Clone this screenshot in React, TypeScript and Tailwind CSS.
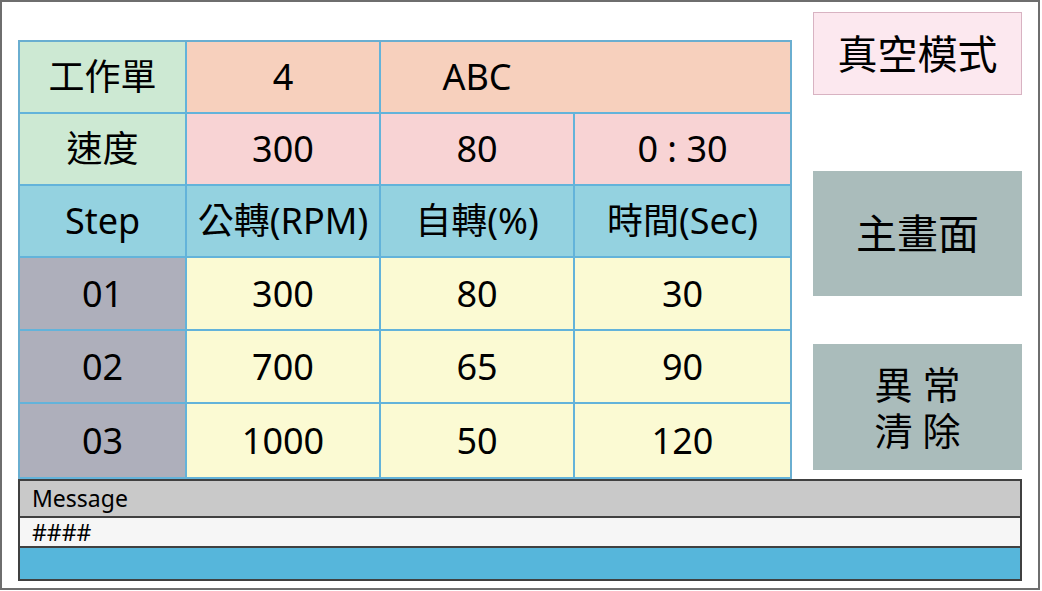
import React from 'react';

const font = { fontFamily: '"Noto Sans", "Noto Sans CJK TC", sans-serif' };

const Cell = ({ bg, children }: { bg: string; children?: React.ReactNode }) => (
  <div className={`${bg} flex items-center justify-center text-[36px] text-black leading-none`}>{children}</div>
);

const steps = [
  ['01', '300', '80', '30'],
  ['02', '700', '65', '90'],
  ['03', '1000', '50', '120'],
];

export default function App() {
  return (
    <div className="w-[1042px] h-[591px] bg-white" style={font}>
      <div className="w-[1040px] h-[590px] border-2 border-[#6e6e6e] bg-white flex flex-col">
        <div className="h-[477px] flex pl-[16px]">
          {/* parameter table */}
          <div className="mt-[38px] w-[774px] h-[439px] bg-[#63b3da] border-2 border-b-0 border-[#6aaed0] grid grid-cols-[165px_192px_192px_215px] grid-rows-[70px_70px_70px_71px_71px_73px] gap-[2px]">
            <Cell bg="bg-[#cde9d3]">工作單</Cell>
            <Cell bg="bg-[#f7d0bd]">4</Cell>
            <div className="col-span-2 bg-[#f7d0bd] flex items-center">
              <span className="w-[192px] text-center text-[36px] leading-none">ABC</span>
            </div>

            <Cell bg="bg-[#cde9d3]">速度</Cell>
            <Cell bg="bg-[#f8d3d4]">300</Cell>
            <Cell bg="bg-[#f8d3d4]">80</Cell>
            <Cell bg="bg-[#f8d3d4]">0 : 30</Cell>

            <Cell bg="bg-[#94d2e0]">Step</Cell>
            <Cell bg="bg-[#94d2e0]">公轉(RPM)</Cell>
            <Cell bg="bg-[#94d2e0]">自轉(%)</Cell>
            <Cell bg="bg-[#94d2e0]">時間(Sec)</Cell>

            {steps.map((row) => (
              <React.Fragment key={row[0]}>
                <Cell bg="bg-[#aeafbb]">{row[0]}</Cell>
                <Cell bg="bg-[#fbfad3]">{row[1]}</Cell>
                <Cell bg="bg-[#fbfad3]">{row[2]}</Cell>
                <Cell bg="bg-[#fbfad3]">{row[3]}</Cell>
              </React.Fragment>
            ))}
          </div>

          {/* side buttons */}
          <div className="ml-[21px] mt-[10px] w-[209px] flex flex-col">
            <div className="h-[83px] bg-[#fce8ef] border border-[#d8b3c2] flex items-center justify-center text-[40px] leading-none">
              真空模式
            </div>
            <div className="mt-[76px] h-[125px] bg-[#aabcbb] flex items-center justify-center text-[41px] leading-none">
              主畫面
            </div>
            <div className="mt-[48px] h-[126px] bg-[#aabcbb] flex items-center justify-center">
              <p className="text-center text-[38px] leading-[46px] whitespace-pre-line">{'異 常\n清 除'}</p>
            </div>
          </div>
        </div>

        {/* message area */}
        <div className="ml-[16px] w-[1004px] border-2 border-[#404040] flex flex-col">
          <div className="h-[37px] bg-[#c9c9c9] border-b-2 border-[#404040] flex items-center pl-[12px] text-[23px] leading-none">
            Message
          </div>
          <div className="h-[30px] bg-[#f6f6f6] border-b-2 border-[#404040] flex items-center pl-[12px] text-[23px] leading-none">
            ####
          </div>
          <div className="h-[31px] bg-[#56b6db]" />
        </div>
      </div>
    </div>
  );
}
